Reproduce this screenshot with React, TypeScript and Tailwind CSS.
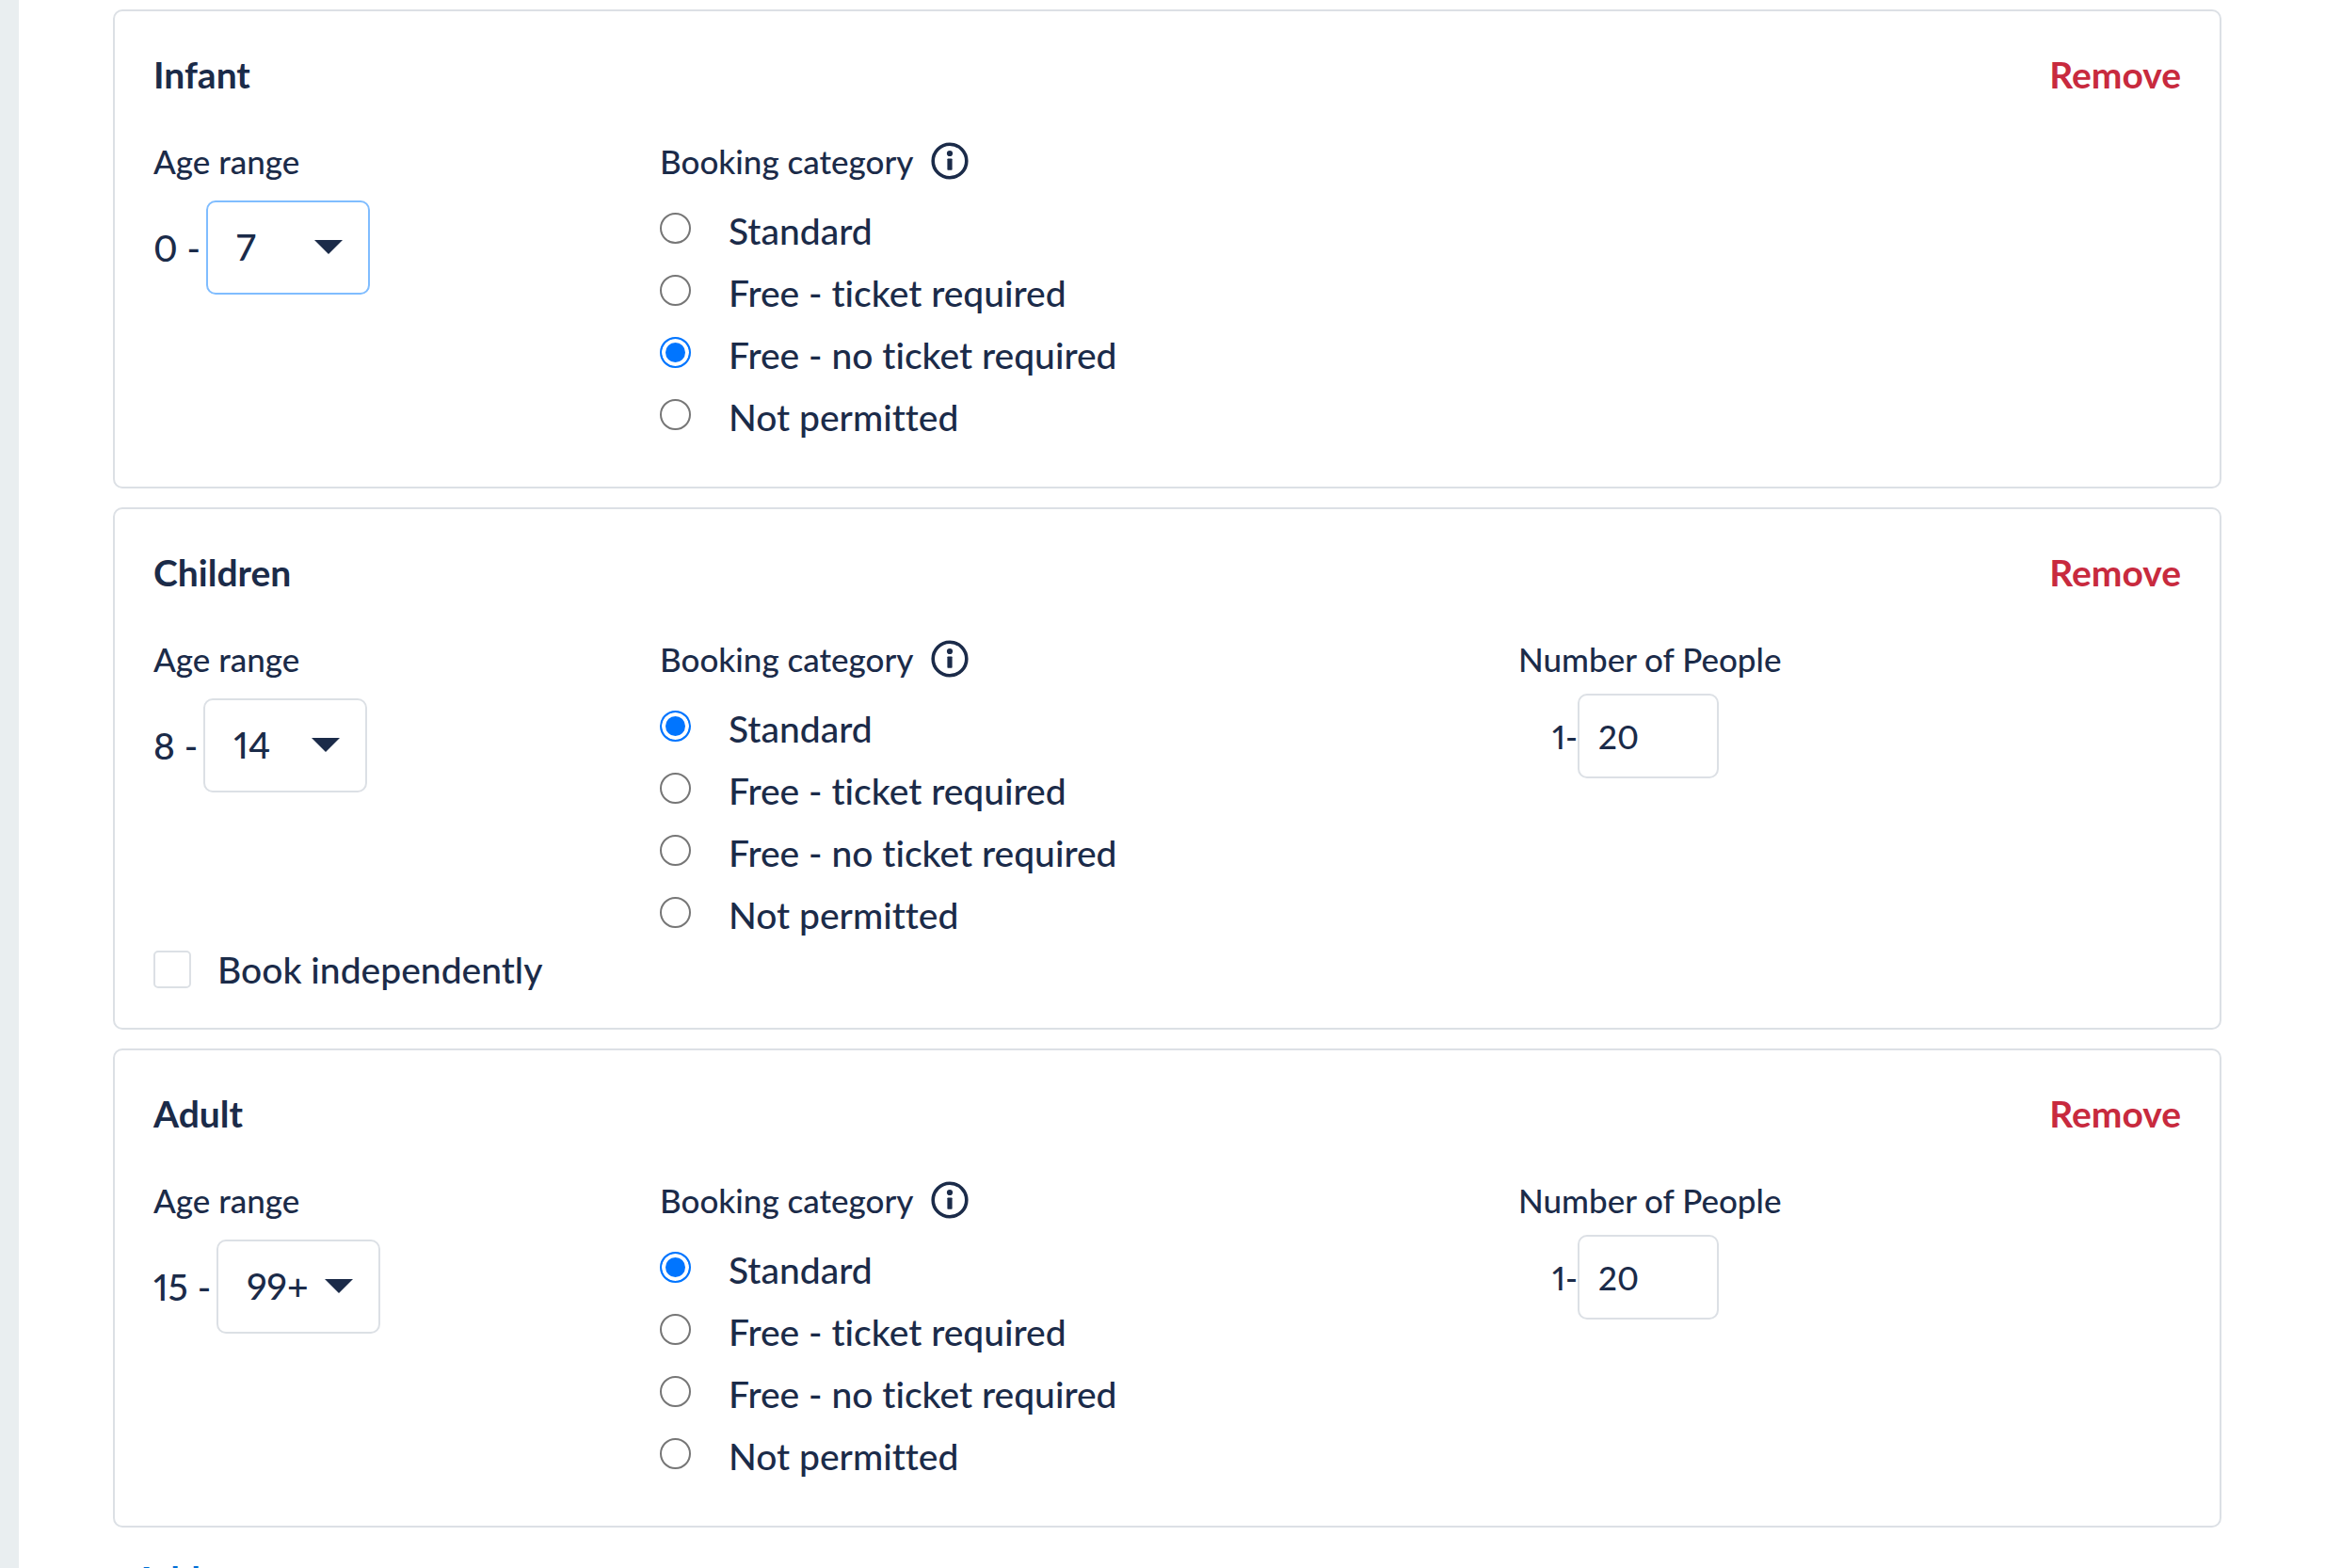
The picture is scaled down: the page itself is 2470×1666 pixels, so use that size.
import React, { useState } from 'react';

const CATEGORIES = [
  'Standard',
  'Free - ticket required',
  'Free - no ticket required',
  'Not permitted',
];

interface AgeGroup {
  id: string;
  title: string;
  from: number;
  to: string;
  options: string[];
  category: string;
  people?: string;
  independent?: boolean;
  active?: boolean;
}

const GROUPS: AgeGroup[] = [
  {
    id: 'infant',
    title: 'Infant',
    from: 0,
    to: '7',
    options: ['5', '6', '7'],
    category: 'Free - no ticket required',
    active: true,
  },
  {
    id: 'children',
    title: 'Children',
    from: 8,
    to: '14',
    options: ['12', '13', '14'],
    category: 'Standard',
    people: '20',
    independent: true,
  },
  {
    id: 'adult',
    title: 'Adult',
    from: 15,
    to: '99+',
    options: ['59', '64', '99+'],
    category: 'Standard',
    people: '20',
  },
];

const InfoIcon = () => (
  <svg viewBox="0 0 40 40" className="size-10" fill="none" aria-hidden="true">
    <circle cx="20" cy="20" r="17.8" stroke="currentColor" strokeWidth="3.6" />
    <circle cx="20" cy="12" r="3.1" fill="currentColor" />
    <rect x="17.4" y="17.4" width="5.2" height="12.4" rx="0.8" fill="currentColor" />
  </svg>
);

const GroupCard: React.FC<{ group: AgeGroup; onRemove: () => void }> = ({
  group,
  onRemove,
}) => {
  const [to, setTo] = useState(group.to);
  const [category, setCategory] = useState(group.category);
  const [people, setPeople] = useState(group.people ?? '');

  return (
    <section className="rounded-[10px] border-2 border-[#dce0e5] px-[41px] pt-10 pb-[41px]">
      {/* Header */}
      <div className="flex items-center justify-between text-[39px] leading-[54px] font-bold">
        <h2>{group.title}</h2>
        <button type="button" onClick={onRemove} className="text-[#c82a3e]">
          Remove
        </button>
      </div>

      <div className="mt-10 grid grid-cols-[538fr_912fr_704fr]">
        {/* Age range */}
        <div>
          <label htmlFor={`${group.id}-to`} className="block text-[35px] leading-[50px]">
            Age range
          </label>
          <div className="mt-[17px] flex items-center gap-1.5 text-[39px]">
            <span>{group.from} -</span>
            <div className="relative">
              <select
                id={`${group.id}-to`}
                value={to}
                onChange={(e) => setTo(e.target.value)}
                className={`h-[100px] w-[174px] appearance-none rounded-[10px] border-2 bg-white pb-0.5 pl-[30px] outline-none ${
                  group.active ? 'border-[#80bdff]' : 'border-[#dce0e5]'
                }`}
              >
                {group.options.map((option) => (
                  <option key={option}>{option}</option>
                ))}
              </select>
              <svg
                viewBox="0 0 30 15"
                className="pointer-events-none absolute top-[42px] right-[29px] w-[30px]"
                fill="currentColor"
                aria-hidden="true"
              >
                <path d="M0 0h30L15 15z" />
              </svg>
            </div>
          </div>
        </div>

        {/* Booking category */}
        <fieldset>
          <legend className="flex items-center gap-[18px] text-[35px] leading-[50px]">
            Booking category
            <button type="button" aria-label="About booking categories">
              <InfoIcon />
            </button>
          </legend>
          <div className="mt-4">
            {CATEGORIES.map((name) => (
              <label key={name} className="flex items-start gap-10 text-[39px] leading-[66px]">
                <input
                  type="radio"
                  name={`${group.id}-category`}
                  checked={category === name}
                  onChange={() => setCategory(name)}
                  className="mt-3.5 size-[33px] shrink-0 appearance-none rounded-full border-2 border-[#767676] checked:border-[#0075ff] checked:bg-[#0075ff] checked:shadow-[inset_0_0_0_4px_#fff]"
                />
                {name}
              </label>
            ))}
          </div>
        </fieldset>

        {/* Number of people */}
        {group.people && (
          <div className="text-[35px]">
            <label htmlFor={`${group.id}-people`} className="block leading-[50px]">
              Number of People
            </label>
            <div className="mt-3 flex items-center pl-9">
              <span>1-</span>
              <input
                id={`${group.id}-people`}
                type="text"
                value={people}
                onChange={(e) => setPeople(e.target.value)}
                className="h-[90px] w-[150px] rounded-[10px] border-2 border-[#dce0e5] px-5 outline-none"
              />
            </div>
          </div>
        )}
      </div>

      {group.independent && (
        <label className="mt-1 flex h-[42px] items-center gap-7 text-[39px]">
          <input
            type="checkbox"
            className="size-10 appearance-none rounded-[5px] border-2 border-[#dce0e5] checked:bg-[#0075ff]"
          />
          Book independently
        </label>
      )}
    </section>
  );
};

const App: React.FC = () => {
  const [groups, setGroups] = useState(GROUPS);

  return (
    <div className="flex min-h-screen bg-white font-[Lato,sans-serif] font-medium text-[#1b2b49] proportional-nums [font-variant-ligatures:none]">
      <div className="w-5 shrink-0 bg-[#e9eef0]" />
      <main className="flex-1 pt-[10px] pr-[110px] pl-[100px]">
        <div className="flex flex-col gap-5">
          {groups.map((group) => (
            <GroupCard
              key={group.id}
              group={group}
              onRemove={() => setGroups(groups.filter((g) => g.id !== group.id))}
            />
          ))}
        </div>
        <button
          type="button"
          className="mt-7 ml-[22px] block text-[39px] leading-[54px] font-bold text-[#006fd6]"
        >
          Add
        </button>
      </main>
    </div>
  );
};

export default App;
